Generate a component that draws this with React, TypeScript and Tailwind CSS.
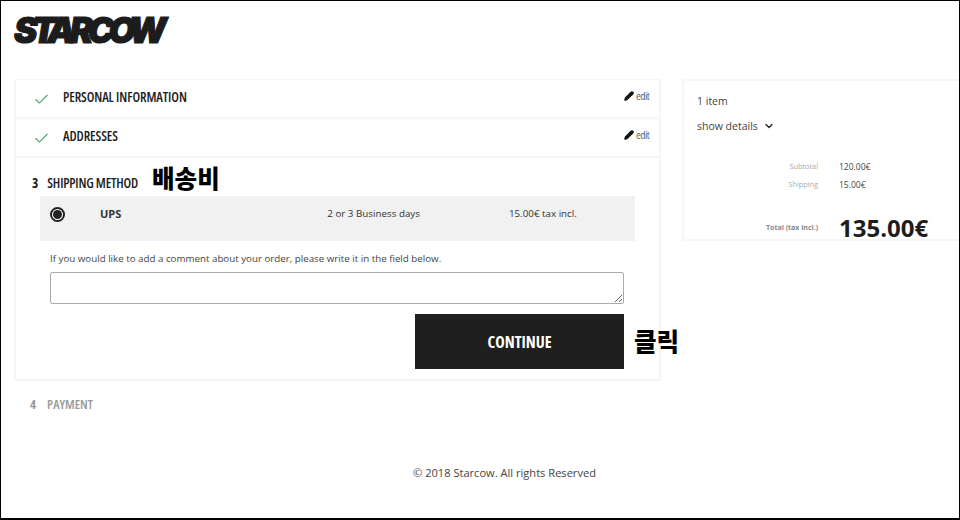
import { Check, ChevronDown, Pencil } from "lucide-react";

const kr = { fontFamily: '"Noto Sans CJK KR", sans-serif' };

const DoneRow = ({ title }: { title: string }) => (
  <div className="flex h-[39px] items-center border-b-2 border-[#f6f6f6] pl-[17px] pr-[10px]">
    <Check size={17} strokeWidth={1.5} className="mt-[2px] text-[#4f9d69]" />
    <h2 className="mb-[2px] ml-[13px] text-[13.5px] font-semibold uppercase tracking-[-0.1px] text-[#1d1d1d] [font-stretch:75%]">{title}</h2>
    <span className="mb-[5px] ml-auto flex items-center gap-[2px] text-[11.5px] tracking-[-0.6px] text-[#666] [font-stretch:75%]">
      <Pencil size={10} strokeWidth={3} className="text-[#111]" fill="#111" />
      edit
    </span>
  </div>
);

const App = () => {
  return (
    <div className="flex h-[520px] w-[960px] flex-col overflow-hidden border-b-2 border-l border-t border-r border-black bg-white font-['Open_Sans',sans-serif] text-[#444]">
      <div className="h-[78px] pl-[13px] pt-[5px]">
        <span className="block text-[35px] font-black italic leading-[48px] tracking-[-5.4px] text-[#1c1c1c] [-webkit-text-stroke:1.2px_#1c1c1c] font-['Inter',sans-serif]">
          STARCOW
        </span>
      </div>

      <div className="flex items-start pl-[13px]">
        <div className="w-[647px]">
          <div className="border-x-2 border-t border-[#f6f6f6]">
            <DoneRow title="Personal Information" />
            <DoneRow title="Addresses" />
          </div>

          <div className="h-[223px] border-x-2 border-b-2 border-[#f6f6f6] pl-[15px] pr-[24px]">
            <div className="flex h-[38px] items-center">
              <span className="ml-[1px] mt-[12px] text-[13.5px] font-bold text-[#1d1d1d] [font-stretch:75%]">3</span>
              <h2 className="ml-[9px] mt-[12px] text-[13.5px] font-semibold uppercase tracking-[-0.2px] text-[#1d1d1d] [font-stretch:75%]">Shipping Method</h2>
              <span style={kr} className="ml-[14px] mt-[3px] text-[24.5px] font-black leading-none text-black">배송비</span>
            </div>

            <div className="ml-[9px] flex h-[45px] items-start bg-[#f1f1f1] text-[9.8px] text-[#333]">
              <span className="ml-[10px] mt-[11px] flex h-[15px] w-[15px] items-center justify-center rounded-full border-2 border-[#222] bg-white">
                <span className="h-[9px] w-[9px] rounded-full bg-[#222]" />
              </span>
              <span className="ml-[35px] mt-[10px] text-[11px] font-bold">UPS</span>
              <span className="ml-[206px] mt-[11px]">2 or 3 Business days</span>
              <span className="ml-[89px] mt-[11px]">15.00€ tax incl.</span>
            </div>

            <p className="ml-[19px] mt-[11px] text-[9.75px] leading-[14px] text-[#444]">
              If you would like to add a comment about your order, please write it in the field below.
            </p>
            <textarea className="ml-[19px] mt-[6px] block h-[32px] w-[574px] rounded-[2px] border border-[#aaa] bg-white" />
            <div className="ml-[19px] flex w-[630px] items-center justify-end gap-[10px] pt-[10px]">
              <button className="h-[55px] w-[209px] bg-[#1f1f1f] text-[16px] font-bold uppercase text-white [font-stretch:75%]">
                Continue
              </button>
              <span style={kr} className="w-[46px] whitespace-nowrap text-[24.5px] font-black leading-none text-black">클릭</span>
            </div>
          </div>

          <div className="ml-[16px] mt-[14px] flex text-[13px] font-bold uppercase text-[#999] [font-stretch:75%]">
            <span>4</span>
            <span className="ml-[11px] font-semibold">Payment</span>
          </div>
        </div>

        <aside className="ml-[21px] h-[162px] flex-1 border-2 border-r-0 border-[#f6f6f6] pl-[13px] text-[#444]">
          <p className="mt-[12px] text-[10.5px] leading-[16px]">1 item</p>
          <p className="mt-[9px] flex items-center gap-[5px] text-[10.5px] leading-[16px]">
            show details
            <ChevronDown size={12} strokeWidth={2.5} className="text-[#222]" />
          </p>
          <div className="mt-[27px] grid grid-cols-[121px_auto] gap-x-[21px] gap-y-[7px] text-[7.3px] leading-[11px]">
            <span className="text-right text-[#aaa]">Subtotal</span>
            <span className="text-[8.5px] text-[#444]">120.00€</span>
            <span className="text-right text-[#aaa]">Shipping</span>
            <span className="text-[8.5px] text-[#444]">15.00€</span>
          </div>
          <div className="mt-[23px] grid grid-cols-[121px_auto] items-center gap-x-[21px]">
            <span className="text-right text-[7px] font-bold text-[#888]">Total (tax incl.)</span>
            <span className="text-[24px] font-bold leading-[30px] text-[#1d1d1d]">135.00€</span>
          </div>
        </aside>
      </div>

      <footer className="mt-[50px] w-[1007px] text-center text-[11.1px] text-[#444]">© 2018 Starcow. All rights Reserved</footer>
    </div>
  );
};

export default App;
